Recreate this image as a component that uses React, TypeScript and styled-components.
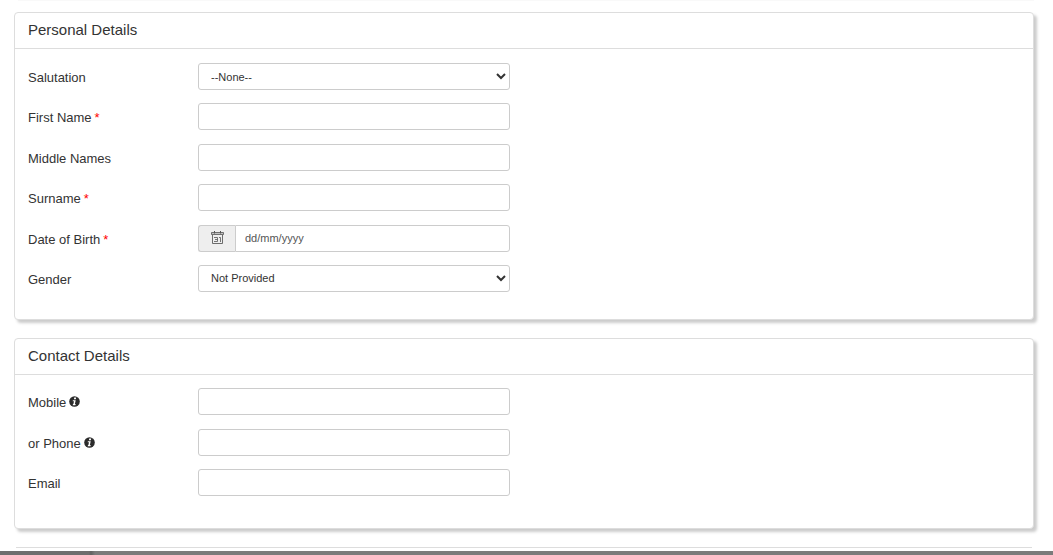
import React from "react";
import styled, { createGlobalStyle, css } from "styled-components";

const GlobalStyle = createGlobalStyle`
  *, *::before, *::after { box-sizing: border-box; }
  body {
    margin: 0;
    background: #fff;
    color: #333;
    font-family: "Liberation Sans", Arial, Helvetica, sans-serif;
    font-size: 13px;
    line-height: 18px;
  }
`;

const Page = styled.main`
  display: flex;
  flex-direction: column;
  min-height: 100vh;
`;

const TopEdge = styled.div`
  height: 1px;
  margin: 0 19px 11px 18px;
  background: #f9f9f9;
`;

const Panels = styled.div`
  display: flex;
  flex-direction: column;
  gap: 18px;
  padding: 0 19px 0 14px;
`;

const Panel = styled.section`
  border: 1px solid #ddd;
  border-radius: 4px;
  background: #fff;
  box-shadow: 3px 3px 3px #ccc;
`;

const PanelHeading = styled.h2`
  margin: 0;
  padding: 7px 13px 9px;
  border-bottom: 1px solid #ddd;
  font-size: 15px;
  font-weight: 400;
  line-height: 19px;
`;

const Fields = styled.div<{ $minHeight: number; $top: number; $bottom: number }>`
  display: grid;
  align-content: space-between;
  min-height: ${(p) => p.$minHeight}px;
  margin: ${(p) => p.$top}px 13px ${(p) => p.$bottom}px;
`;

const Row = styled.div`
  display: grid;
  grid-template-columns: 170px minmax(0, 312px);
  align-items: center;
`;

const Label = styled.label`
  display: flex;
  align-items: center;
  gap: 3px;
  padding-top: 3px;
`;

const Required = styled.span`
  color: #f00;
`;

const control = css`
  width: 100%;
  height: 27px;
  border: 1px solid #ccc;
  border-radius: 3px;
  background: #fff;
  color: #333;
  font-family: inherit;
  font-size: 11px;
`;

const TextInput = styled.input`
  ${control}
  padding: 0 9px;
  &::placeholder {
    color: #555;
    opacity: 1;
  }
`;

const Select = styled.select`
  ${control}
  padding: 0 0 0 8px;
`;

const InputGroup = styled.div`
  display: flex;
  ${TextInput} {
    flex: 1;
    min-width: 0;
    border-radius: 0 3px 3px 0;
  }
`;

const Addon = styled.button`
  display: flex;
  align-items: center;
  justify-content: center;
  width: 37px;
  padding: 0 0 2px;
  border: 1px solid #ccc;
  border-right: 0;
  border-radius: 3px 0 0 3px;
  background: #eee;
  color: #555;
`;

const NextPanelEdge = styled.div`
  height: 4px;
  margin: 18px 21px 0 16px;
  border-top: 1px solid #ddd;
`;

const BottomBar = styled.footer`
  height: 4px;
  background: linear-gradient(to right, #6e6e6e 89px, #626262 91px, #7b7b7b 95px);
`;

const CalendarIcon = () => (
  <svg width="13" height="13" viewBox="0 0 13 13" fill="none" stroke="currentColor" aria-hidden="true">
    <path d="M0.5 1.5H12.5V3.5H0.5Z" fill="currentColor" fillOpacity="0.3" strokeOpacity="0.8" />
    <path d="M3.5 0V2.5M9.5 0V2.5" />
    <path d="M1.5 4V12.5H11.5V4" strokeOpacity="0.85" />
    <path d="M3 6.5H6.5V10.5H3M4 8.5H6.5M8 6.5H9.5V11" strokeOpacity="0.8" />
  </svg>
);

const InfoIcon = () => (
  <svg width="11" height="14" viewBox="0 0 11 14" role="img" aria-label="More information">
    <circle cx="5.5" cy="5.5" r="5.3" fill="#2b2b2b" />
    <path d="M5.2 1.5H7.2L6.8 3.3H4.9Z" fill="#fff" />
    <path d="M3.9 4.2H6.7L5.9 8H6.7L6.4 9.2H3.7L4 8H4.4L5 5.2H3.7Z" fill="#fff" />
  </svg>
);

interface FieldProps {
  id: string;
  label: string;
  required?: boolean;
  info?: boolean;
  children: React.ReactNode;
}

const Field = ({ id, label, required, info, children }: FieldProps) => (
  <Row>
    <Label htmlFor={id}>
      {label}
      {required && <Required>*</Required>}
      {info && <InfoIcon />}
    </Label>
    {children}
  </Row>
);

export default function App() {
  return (
    <>
      <GlobalStyle />
      <Page>
        <TopEdge />
        <Panels>
          <Panel>
            <PanelHeading>Personal Details</PanelHeading>
            <Fields $minHeight={229} $top={14} $bottom={27}>
              <Field id="salutation" label="Salutation">
                <Select id="salutation">
                  <option>--None--</option>
                </Select>
              </Field>
              <Field id="first-name" label="First Name" required>
                <TextInput id="first-name" />
              </Field>
              <Field id="middle-names" label="Middle Names">
                <TextInput id="middle-names" />
              </Field>
              <Field id="surname" label="Surname" required>
                <TextInput id="surname" />
              </Field>
              <Field id="dob" label="Date of Birth" required>
                <InputGroup>
                  <Addon type="button" aria-label="Choose a date">
                    <CalendarIcon />
                  </Addon>
                  <TextInput id="dob" placeholder="dd/mm/yyyy" />
                </InputGroup>
              </Field>
              <Field id="gender" label="Gender">
                <Select id="gender">
                  <option>Not Provided</option>
                </Select>
              </Field>
            </Fields>
          </Panel>
          <Panel>
            <PanelHeading>Contact Details</PanelHeading>
            <Fields $minHeight={108} $top={13} $bottom={32}>
              <Field id="mobile" label="Mobile" info>
                <TextInput id="mobile" type="tel" />
              </Field>
              <Field id="phone" label="or Phone" info>
                <TextInput id="phone" type="tel" />
              </Field>
              <Field id="email" label="Email">
                <TextInput id="email" type="email" />
              </Field>
            </Fields>
          </Panel>
        </Panels>
        <NextPanelEdge />
        <BottomBar />
      </Page>
    </>
  );
}
